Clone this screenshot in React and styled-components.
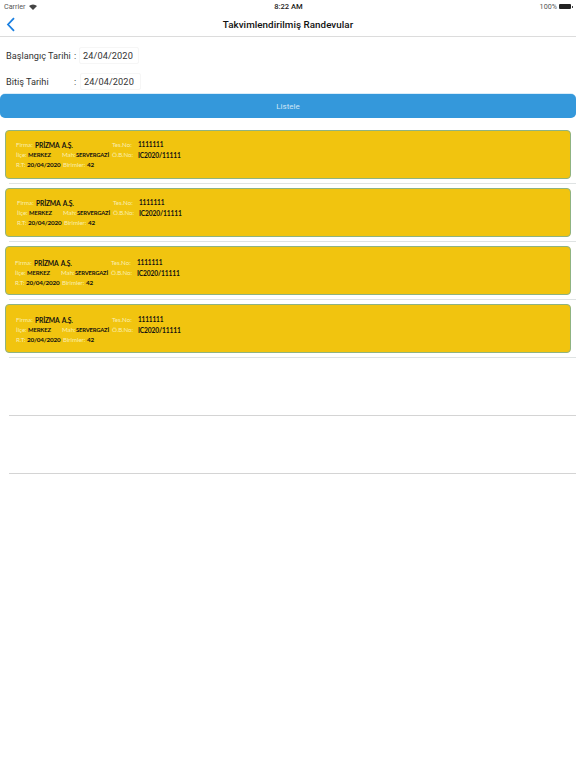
import React from "react";
import styled, { createGlobalStyle } from "styled-components";

const Global = createGlobalStyle`
  html, body { margin: 0; padding: 0; background: #fff; }
  body { font-family: "Roboto", "Liberation Sans", sans-serif; overflow: hidden; }
`;
const Page = styled.div`width: 576px; height: 768px; background: #fff; overflow: hidden;`;
const StatusBar = styled.div`
  height: 13px; padding: 0 4px; display: grid; grid-template-columns: 1fr auto 1fr; align-items: center;
  font-size: 7.2px; color: #333;
`;
const StatusLeft = styled.div`display: flex; align-items: center; gap: 4px; color: #555;`;
const StatusTime = styled.div`font-weight: 500; color: #222; font-size: 7.6px; margin-left: 1px;`;
const StatusRight = styled.div`display: flex; align-items: center; justify-content: flex-end; gap: 2px; color: #555;`;
const Battery = styled.div`
  width: 12px; height: 5px; background: #222; border-radius: 1px; margin-right: 1px; position: relative;
  &::after { content: ""; position: absolute; right: -1.5px; top: 1.5px; width: 1px; height: 2px; background: #444; }
`;
const NavBar = styled.div`
  height: 23px; position: relative; display: flex; align-items: center; justify-content: center;
  border-bottom: 1px solid #dcdcdc;
`;
const Back = styled.svg`position: absolute; left: 6px; top: 4px;`;
const Title = styled.div`font-size: 9.8px; font-weight: 500; color: #111; letter-spacing: 0.05px;`;
const Form = styled.div`padding: 10px 0 0 6px; display: flex; flex-direction: column; gap: 9px;`;
const FormRow = styled.div`display: flex; align-items: center; height: 17px; color: #333; font-size: 9.2px;`;
const FormLabel = styled.div`width: 68px; white-space: nowrap;`;
const Colon = styled.div`width: ${p => p.$w}px;`;
const DateBox = styled.div`
  width: ${p => p.$w}px; height: 17px; box-sizing: border-box; padding-left: 3px; line-height: 15px;
  border: 1px solid #f6f6f6; border-radius: 2px; font-size: 9.2px; color: #333; letter-spacing: 0.1px;
`;
const ListButton = styled.div`
  margin-top: 4px; height: 24px; background: #3498db; border-radius: 5px; color: #cfe6f6;
  display: flex; align-items: center; justify-content: center; font-size: 8px;
  box-shadow: 0 -0.5px 0 #b5dcf3;
`;
const List = styled.div`padding-top: 8px;`;
const Row = styled.div`
  height: 57px; margin-left: 9px; border-bottom: 1px solid ${p => p.$dark ? "#d4d4d4" : "#dfe3e3"};
  position: relative;
`;
const Card = styled.div`
  position: absolute; left: -4px; top: 4px; width: 566px; height: 49px; box-sizing: border-box;
  background: #f1c40f; border: 1px solid #8fb381; border-radius: 4px;
  padding: ${p => p.$top}px 0 0 ${p => p.$left}px;
  font-family: "Lato", "Open Sans", sans-serif; font-weight: 700; line-height: 10px;
`;
const Line = styled.div`display: flex; height: 10px; white-space: nowrap;`;
const Label = styled.span`display: block; width: ${p => p.$w}px; color: #f9eeb0; font-size: 6.2px; font-weight: 400; letter-spacing: -0.05px;`;
const Value = styled.span`display: block; width: ${p => p.$w}px; color: #111; font-size: ${p => p.$size}px; letter-spacing: -0.15px; word-spacing: 1.2px;`;

const Wifi = () => (
  <svg width="8" height="6" viewBox="0 0 16 12" fill="#444">
    <path d="M8 12 0 4a11.5 11.5 0 0 1 16 0z" />
  </svg>
);

function Appointment({ top, left }) {
  return (
    <Card $top={top} $left={left}>
      <Line>
        <Label $w={19}>Firma:</Label>
        <Value $w={77} $size={6.7}>PRİZMA A.Ş.</Value>
        <Label $w={26}>Tes.No:</Label>
        <Value $w={60} $size={6.5}>1111111</Value>
      </Line>
      <Line>
        <Label $w={12}>İlçe:</Label>
        <Value $w={34} $size={5.9}>MERKEZ</Value>
        <Label $w={14}>Mah:</Label>
        <Value $w={36} $size={5.8}>SERVERGAZİ</Value>
        <Label $w={26}>Ö.B.No:</Label>
        <Value $w={60} $size={6.7}>IC2020/11111</Value>
      </Line>
      <Line>
        <Label $w={11}>R.T:</Label>
        <Value $w={36} $size={6.3}>20/04/2020</Value>
        <Label $w={24}>Birimler:</Label>
        <Value $w={20} $size={6.3}>42</Value>
      </Line>
    </Card>
  );
}

export default function App() {
  return (
    <Page>
      <Global />
      <StatusBar>
        <StatusLeft>Carrier <Wifi /></StatusLeft>
        <StatusTime>8:22 AM</StatusTime>
        <StatusRight>100% <Battery /></StatusRight>
      </StatusBar>
      <NavBar>
        <Back width="10" height="15" viewBox="0 0 10 15" fill="none">
          <path d="M8 1.2 2 7.5 8 13.8" stroke="#1a7fe0" strokeWidth="1.8" />
        </Back>
        <Title>Takvimlendirilmiş Randevular</Title>
      </NavBar>
      <Form>
        <FormRow>
          <FormLabel>Başlangıç Tarihi</FormLabel>
          <Colon $w={5}>:</Colon>
          <DateBox $w={60}>24/04/2020</DateBox>
        </FormRow>
        <FormRow>
          <FormLabel>Bitiş Tarihi</FormLabel>
          <Colon $w={6}>:</Colon>
          <DateBox $w={61}>24/04/2020</DateBox>
        </FormRow>
      </Form>
      <ListButton>Listele</ListButton>
      <List>
        <Row><Appointment top={9} left={10} /></Row>
        <Row><Appointment top={9} left={11} /></Row>
        <Row><Appointment top={11} left={9} /></Row>
        <Row><Appointment top={10} left={10} /></Row>
        <Row $dark />
        <Row $dark />
      </List>
    </Page>
  );
}
